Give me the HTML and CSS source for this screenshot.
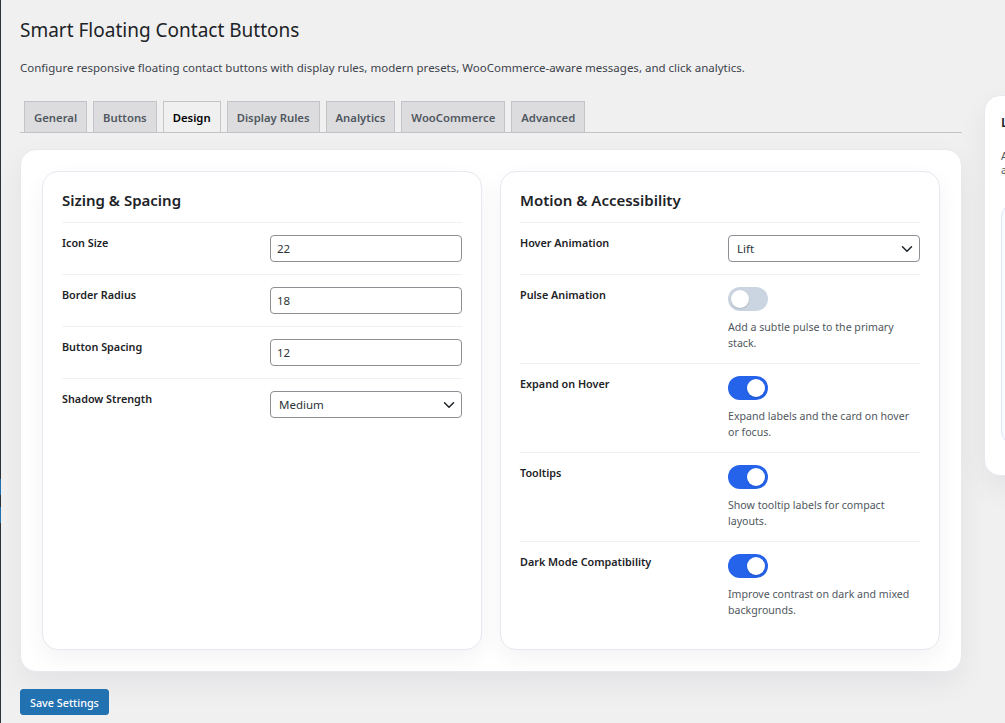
FILE: index.html
```html
<!DOCTYPE html>
<html lang="en">
<head>
    <meta charset="UTF-8">
    <meta name="viewport" content="width=device-width, initial-scale=1.0">
    <title>Smart Floating Contact Buttons</title>
    <link rel="stylesheet" href="styles.css">
</head>
<body>
    <div class="admin-edge">
        <span class="edge-mark first"></span>
        <span class="edge-mark"></span>
    </div>

    <div class="wrap">
        <h1 class="page-title">Smart Floating Contact Buttons</h1>
        <p class="page-desc">Configure responsive floating contact buttons with display rules, modern presets, WooCommerce-aware messages, and click analytics.</p>

        <div class="layout">
            <div class="main-col">
                <nav class="nav-tabs">
                    <a href="#" class="nav-tab">General</a>
                    <a href="#" class="nav-tab">Buttons</a>
                    <a href="#" class="nav-tab active">Design</a>
                    <a href="#" class="nav-tab">Display Rules</a>
                    <a href="#" class="nav-tab">Analytics</a>
                    <a href="#" class="nav-tab">WooCommerce</a>
                    <a href="#" class="nav-tab">Advanced</a>
                </nav>

                <div class="panel">
                    <section class="card">
                        <h2 class="card-title">Sizing &amp; Spacing</h2>
                        <div class="field">
                            <label class="field-label">Icon Size</label>
                            <div class="field-control"><input class="text-input" type="text" value="22"></div>
                        </div>
                        <div class="field">
                            <label class="field-label">Border Radius</label>
                            <div class="field-control"><input class="text-input" type="text" value="18"></div>
                        </div>
                        <div class="field">
                            <label class="field-label">Button Spacing</label>
                            <div class="field-control"><input class="text-input" type="text" value="12"></div>
                        </div>
                        <div class="field">
                            <label class="field-label">Shadow Strength</label>
                            <div class="field-control">
                                <div class="select-wrap">
                                    <select class="select-input">
                                        <option>Medium</option>
                                    </select>
                                    <svg class="chevron" width="12" height="8" viewBox="0 0 12 8"><path d="M1.5 1.8 6 6.2l4.5-4.4" fill="none" stroke="#1d2327" stroke-width="1.5" stroke-linecap="round" stroke-linejoin="round"/></svg>
                                </div>
                            </div>
                        </div>
                    </section>

                    <section class="card">
                        <h2 class="card-title">Motion &amp; Accessibility</h2>
                        <div class="field">
                            <label class="field-label">Hover Animation</label>
                            <div class="field-control">
                                <div class="select-wrap">
                                    <select class="select-input">
                                        <option>Lift</option>
                                    </select>
                                    <svg class="chevron" width="12" height="8" viewBox="0 0 12 8"><path d="M1.5 1.8 6 6.2l4.5-4.4" fill="none" stroke="#1d2327" stroke-width="1.5" stroke-linecap="round" stroke-linejoin="round"/></svg>
                                </div>
                            </div>
                        </div>
                        <div class="field">
                            <label class="field-label">Pulse Animation</label>
                            <div class="field-control">
                                <span class="switch"><span class="knob"></span></span>
                                <p class="help">Add a subtle pulse to the primary stack.</p>
                            </div>
                        </div>
                        <div class="field">
                            <label class="field-label">Expand on Hover</label>
                            <div class="field-control">
                                <span class="switch on"><span class="knob"></span></span>
                                <p class="help">Expand labels and the card on hover or focus.</p>
                            </div>
                        </div>
                        <div class="field">
                            <label class="field-label">Tooltips</label>
                            <div class="field-control">
                                <span class="switch on"><span class="knob"></span></span>
                                <p class="help">Show tooltip labels for compact layouts.</p>
                            </div>
                        </div>
                        <div class="field">
                            <label class="field-label">Dark Mode Compatibility</label>
                            <div class="field-control">
                                <span class="switch on"><span class="knob"></span></span>
                                <p class="help">Improve contrast on dark and mixed backgrounds.</p>
                            </div>
                        </div>
                    </section>
                </div>

                <button class="btn-primary" type="button">Save Settings</button>
            </div>

            <aside class="side-card">
                <h3 class="side-title">Live Preview</h3>
                <p class="side-desc">A quick look at how your buttons will appear on the site.</p>
                <div class="preview-box"></div>
            </aside>
        </div>
    </div>
</body>
</html>
```

FILE: styles.css
```css
html, body {
    margin: 0;
    padding: 0;
}
body {
    font-family: "Noto Sans", "Open Sans", sans-serif;
    font-size: 11.5px;
    color: #3c434a;
    background: #f0f0f1;
    display: flex;
    min-height: 100vh;
    overflow: hidden;
}
.admin-edge {
    width: 1px;
    flex: none;
    background: #2c3338;
    display: flex;
    flex-direction: column;
}
.edge-mark {
    display: block;
    height: 16px;
    background: #2271b1;
    margin-top: 12px;
}
.edge-mark.first {
    margin-top: 479px;
}
.wrap {
    flex: 1;
    padding: 15px 0 0 19px;
    min-width: 0;
}
.page-title {
    font-size: 19px;
    font-weight: 400;
    line-height: 30px;
    margin: 0;
    color: #1d2327;
}
.page-desc {
    margin: 13px 0 0;
    line-height: 20px;
    font-size: 11.5px;
    color: #3c434a;
}
.layout {
    display: grid;
    grid-template-columns: 942px 300px;
    gap: 22px;
    margin-top: 17px;
    align-items: start;
}
.nav-tabs {
    display: flex;
    padding: 6px 0 0 4px;
    border-bottom: 1px solid #c3c4c7;
    gap: 6px;
}
.nav-tab {
    display: block;
    padding: 5px 9px 4px;
    line-height: 21px;
    font-size: 11.3px;
    font-weight: 600;
    color: #50575e;
    background: #dcdcde;
    border: 1px solid #c3c4c7;
    border-bottom: none;
    text-decoration: none;
}
.nav-tab.active {
    background: #f0f0f1;
    color: #000;
}
.panel {
    margin-top: 16px;
    background: #fff;
    border: 1px solid #e7e9ee;
    border-radius: 16px;
    box-shadow: 0 12px 30px rgba(15, 23, 42, 0.06);
    padding: 21px;
    display: grid;
    grid-template-columns: 1fr 1fr;
    gap: 18px;
}
.card {
    background: #fff;
    border: 1px solid #e6e9f0;
    border-radius: 16px;
    box-shadow: 0 8px 22px rgba(15, 23, 42, 0.05);
    padding: 17px 19px 19px;
}
.card-title {
    margin: 0 0 11px;
    font-size: 15px;
    line-height: 22px;
    font-weight: 600;
    color: #1d2327;
}
.field {
    display: grid;
    grid-template-columns: 1fr 1fr;
    gap: 16px;
    padding: 12px 0;
    border-top: 1px solid #eef0f4;
}
.field-label {
    font-size: 10.8px;
    font-weight: 600;
    line-height: 16px;
    color: #1d2327;
}
.field-control {
    display: flex;
    flex-direction: column;
    align-items: flex-start;
}
.text-input,
.select-input {
    width: 100%;
    height: 27px;
    box-sizing: border-box;
    border: 1px solid #8c8f94;
    border-radius: 4px;
    padding: 0 6px;
    font-family: inherit;
    font-size: 11.5px;
    color: #2c3338;
    background: #fff;
}
.select-wrap {
    position: relative;
    width: 100%;
}
.select-input {
    appearance: none;
    -webkit-appearance: none;
    padding: 0 28px 0 8px;
}
.chevron {
    position: absolute;
    right: 7px;
    top: 10px;
    pointer-events: none;
}
.switch {
    display: flex;
    align-items: center;
    width: 40px;
    height: 24px;
    box-sizing: border-box;
    padding: 3px;
    border-radius: 12px;
    background: #cbd5e1;
}
.switch.on {
    background: #2563eb;
    justify-content: flex-end;
}
.knob {
    width: 18px;
    height: 18px;
    border-radius: 50%;
    background: #fff;
    box-shadow: 0 1px 2px rgba(0, 0, 0, 0.15);
}
.help {
    margin: 8px 0 0;
    font-size: 10.6px;
    line-height: 16px;
    color: #50575e;
}
.btn-primary {
    margin-top: 17px;
    height: 26px;
    padding: 0 9px;
    border: 1px solid #2271b1;
    border-radius: 3px;
    background: #2271b1;
    color: #fff;
    font-family: inherit;
    font-size: 10.8px;
    font-weight: 500;
    cursor: pointer;
}
.side-card {
    background: #fff;
    border: 1px solid #e7e9ee;
    border-radius: 16px;
    box-shadow: 0 12px 30px rgba(15, 23, 42, 0.06);
    padding: 17px 16px 30px;
}
.side-title {
    margin: 0;
    font-size: 13px;
    line-height: 18px;
    font-weight: 600;
    color: #1d2327;
}
.side-desc {
    margin: 18px 0 0;
    font-size: 10.6px;
    line-height: 14px;
    color: #50575e;
    width: 200px;
}
.preview-box {
    margin-top: 26px;
    height: 240px;
    border: 1px solid #dbe6f7;
    border-radius: 14px;
    background: #f8fbff;
}
```
